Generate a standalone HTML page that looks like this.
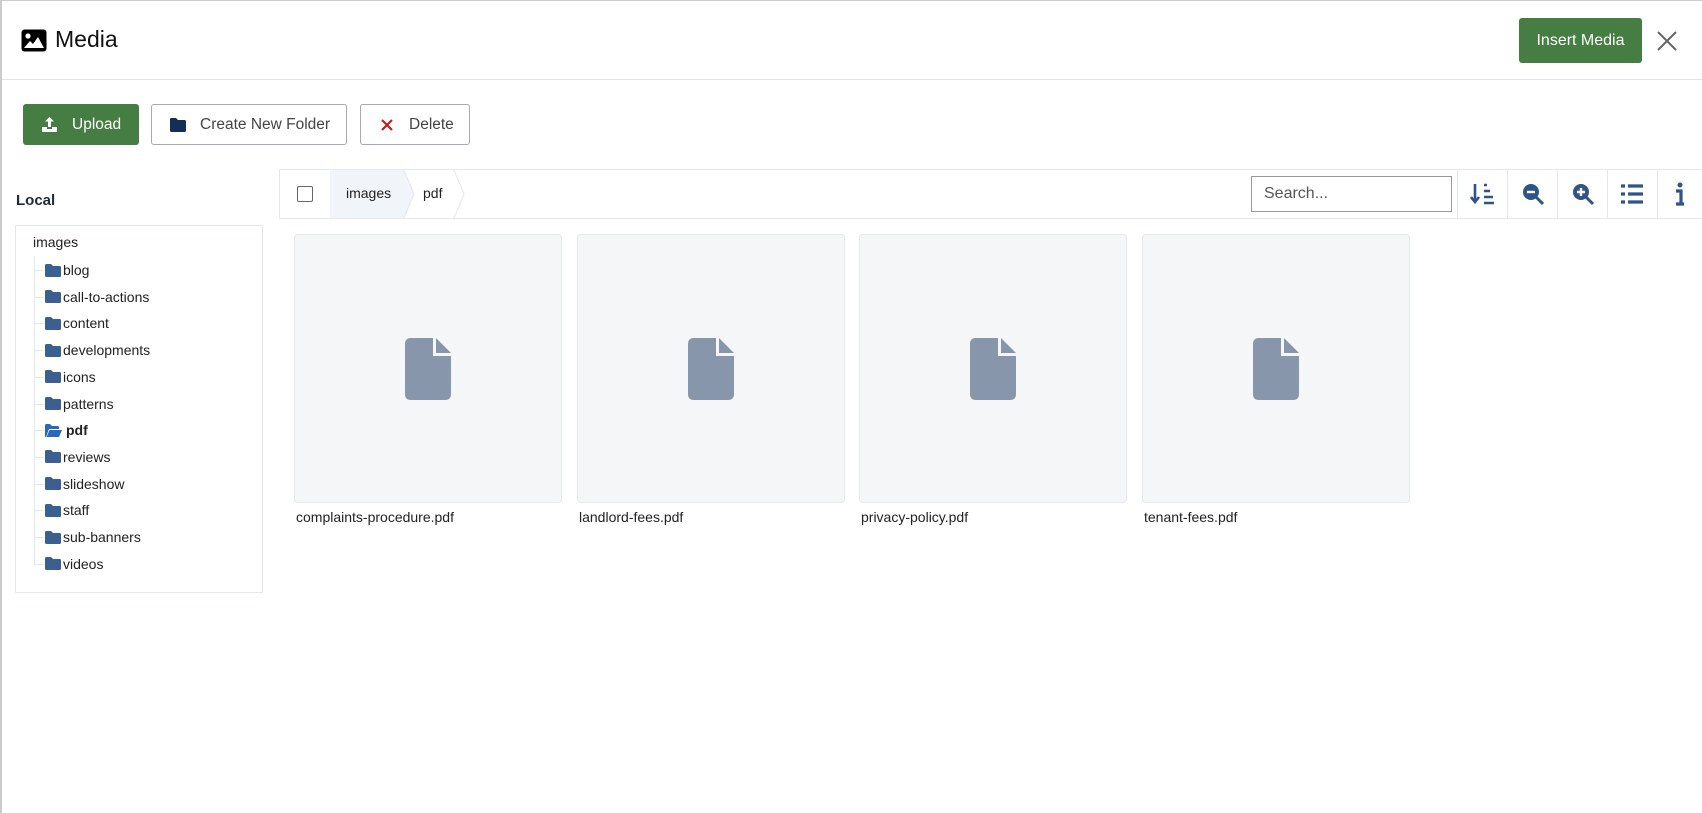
<!DOCTYPE html>
<html><head><style>
*{box-sizing:border-box;margin:0;padding:0}
body{width:1702px;height:813px;background:#fff;font-family:"Liberation Sans",sans-serif;position:relative;overflow:hidden;border-left:2px solid #ccc;border-top:1px solid #ccc}
.a{position:absolute}
.btn{position:absolute;height:41px;border-radius:3px;font-size:15.5px;display:flex;align-items:center;color:#444}
.card{position:absolute;top:233px;width:268px;height:269px;background:#f5f6f8;border:1px solid #e6e9ee;border-radius:4px}
.card svg{position:absolute;left:110px;top:103px}
.lbl{position:absolute;top:508px;font-size:14px;color:#222}
.tree div{position:absolute;left:43px;font-size:14px;color:#222;display:flex;align-items:center}
.tree div svg{margin-right:2px}
.sep{position:absolute;top:168px;width:1px;height:49px;background:#e3e8ef}
</style></head><body>
<svg class="a" style="left:18px;top:27px" width="28" height="25" viewBox="0 0 28 25"><rect x="1.5" y="1.5" width="25" height="22" rx="3" fill="#000"/><circle cx="8" cy="8" r="2.6" fill="#fff"/><path d="M4 20 L10 13 L13 16 L18 9 L24 20Z" fill="#fff"/></svg>
<div class="a" style="left:53px;top:25px;font-size:23px;color:#111">Media</div>
<div class="btn" style="left:1517px;top:17px;width:123px;height:45px;background:#457d43;color:#fff;justify-content:center;font-size:16px">Insert Media</div>
<svg class="a" style="left:1655px;top:30px" width="20" height="20" viewBox="0 0 20 20"><path d="M1 1L19 19M19 1L1 19" stroke="#666" stroke-width="2"/></svg>
<div class="a" style="left:0;top:78px;width:1702px;height:1px;background:#dfe3e8"></div>

<div class="btn" style="left:21px;top:103px;width:116px;background:#457d43;color:#fff">
<svg style="margin-left:18px;margin-right:14px" width="17" height="17" viewBox="0 0 17 17"><path d="M8.5 1L4 5.5h3V11h3V5.5h3z M1 11h5v2h5v-2h5v5H1z" fill="#fff"/></svg>Upload</div>
<div class="btn" style="left:149px;top:103px;width:196px;border:1px solid #a6a9ad;background:#fff">
<svg style="margin-left:18px;margin-right:14px" width="16" height="14" viewBox="0 0 16 14"><path d="M0 1.5Q0 0 1.5 0H6l2 2h6.5Q16 2 16 3.5v9Q16 14 14.5 14h-13Q0 14 0 12.5z" fill="#142f55"/></svg>Create New Folder</div>
<div class="btn" style="left:358px;top:103px;width:110px;border:1px solid #a6a9ad;background:#fff">
<svg style="margin-left:20px;margin-right:16px" width="12" height="12" viewBox="0 0 12 12"><path d="M1 1L11 11M11 1L1 11" stroke="#b22" stroke-width="2.2"/></svg>Delete</div>

<div class="a" style="left:14px;top:191px;font-size:15px;font-weight:bold;color:#1c2a3c">Local</div>
<div class="a" style="left:13px;top:224px;width:248px;height:368px;border:1px solid #e3e8ef"></div>
<div class="a" style="left:31px;top:233px;font-size:14px;color:#222">images</div>
<div class="a" style="left:32px;top:255px;width:1px;height:310px;background:#e3e8ef"></div>
<div class="tree" id="t"></div>
<script>
var items=["blog","call-to-actions","content","developments","icons","patterns","pdf","reviews","slideshow","staff","sub-banners","videos"];
var t=document.getElementById('t');
items.forEach(function(n,i){var y=269+i*26.7;
var h='<span style="position:absolute;left:-11px;width:10px;height:1px;background:#e3e8ef;top:10px"></span>';
var ic=n=="pdf"?'<svg width="17" height="13" viewBox="0 0 17 13"><path d="M0 1.5Q0 0 1.5 0H5l2 2h5.5Q14 2 14 3.5V5H4L1 13H0z" fill="#2a69b8"/><path d="M4.5 6H17l-3 7H1.5z" fill="#2a69b8"/></svg>':'<svg width="16" height="13" viewBox="0 0 16 13"><path d="M0 1.5Q0 0 1.5 0H6l2 2h6.5Q16 2 16 3.5v8Q16 13 14.5 13h-13Q0 13 0 11.5z" fill="#3b5f8f"/></svg>';
t.innerHTML+='<div style="top:'+(y-10)+'px;height:20px">'+h+ic+'<span style="'+(n=="pdf"?'font-weight:bold;margin-left:2px':'')+'">'+n+'</span></div>';});
</script>

<div class="a" style="left:277px;top:168px;width:1425px;height:50px;border:1px solid #e3e8ef;border-right:none"></div>
<div class="a" style="left:295px;top:185px;width:16px;height:16px;border:1px solid #666;border-radius:2px;background:#fff"></div>
<svg class="a" style="left:328px;top:169px" width="140" height="48" viewBox="0 0 140 48"><path d="M0 0H74L84 24L74 48H0z" fill="#f1f4f8"/><path d="M74 0L84 24L74 48" fill="none" stroke="#e3e8ef"/><path d="M124 0L134 24L124 48" fill="none" stroke="#e3e8ef"/></svg>
<div class="a" style="left:344px;top:184px;font-size:14px;color:#222">images</div>
<div class="a" style="left:421px;top:184px;font-size:14px;color:#222">pdf</div>
<div class="a" style="left:1249px;top:175px;width:201px;height:36px;border:1px solid #999;font-size:16px;color:#555;padding:8px 12px">Search...</div>
<div class="sep" style="left:1455px"></div><div class="sep" style="left:1505px"></div><div class="sep" style="left:1555px"></div><div class="sep" style="left:1605px"></div><div class="sep" style="left:1655px"></div>
<svg class="a" style="left:1468px;top:181px" width="26" height="24" viewBox="0 0 26 24"><path d="M5 2v17M1 15l4 5 4-5" stroke="#2f5487" stroke-width="2.6" fill="none"/><path d="M14 3h3M14 9h6M14 15h9M14 21h10" stroke="#2f5487" stroke-width="2.4"/></svg>
<svg class="a" style="left:1519px;top:181px" width="24" height="24" viewBox="0 0 24 24"><circle cx="10" cy="10" r="8" fill="#2f5487"/><path d="M15 15l7 7" stroke="#2f5487" stroke-width="3"/><path d="M6 10h8" stroke="#fff" stroke-width="2.4"/></svg>
<svg class="a" style="left:1569px;top:181px" width="24" height="24" viewBox="0 0 24 24"><circle cx="10" cy="10" r="8" fill="#2f5487"/><path d="M15 15l7 7" stroke="#2f5487" stroke-width="3"/><path d="M6 10h8M10 6v8" stroke="#fff" stroke-width="2.4"/></svg>
<svg class="a" style="left:1619px;top:183px" width="22" height="20" viewBox="0 0 22 20"><path d="M0 2h4M7 2h15M0 10h4M7 10h15M0 18h4M7 18h15" stroke="#2f5487" stroke-width="3.2"/></svg>
<svg class="a" style="left:1673px;top:181px" width="10" height="24" viewBox="0 0 10 24"><circle cx="5" cy="3" r="2.5" fill="#2f5487"/><path d="M1 9h5v12M1 22h8" stroke="#2f5487" stroke-width="3.2" fill="none"/></svg>

<div class="card" style="left:292px"><svg width="46" height="62" viewBox="0 0 46 62"><path d="M6 0H28V18H46V56Q46 62 40 62H6Q0 62 0 56V6Q0 0 6 0z M31 0L46 15H31z" fill="#8796ab"/></svg></div>
<div class="card" style="left:575px"><svg width="46" height="62" viewBox="0 0 46 62"><path d="M6 0H28V18H46V56Q46 62 40 62H6Q0 62 0 56V6Q0 0 6 0z M31 0L46 15H31z" fill="#8796ab"/></svg></div>
<div class="card" style="left:857px"><svg width="46" height="62" viewBox="0 0 46 62"><path d="M6 0H28V18H46V56Q46 62 40 62H6Q0 62 0 56V6Q0 0 6 0z M31 0L46 15H31z" fill="#8796ab"/></svg></div>
<div class="card" style="left:1140px"><svg width="46" height="62" viewBox="0 0 46 62"><path d="M6 0H28V18H46V56Q46 62 40 62H6Q0 62 0 56V6Q0 0 6 0z M31 0L46 15H31z" fill="#8796ab"/></svg></div>
<div class="lbl" style="left:294px">complaints-procedure.pdf</div>
<div class="lbl" style="left:577px">landlord-fees.pdf</div>
<div class="lbl" style="left:859px">privacy-policy.pdf</div>
<div class="lbl" style="left:1142px">tenant-fees.pdf</div>
</body></html>
